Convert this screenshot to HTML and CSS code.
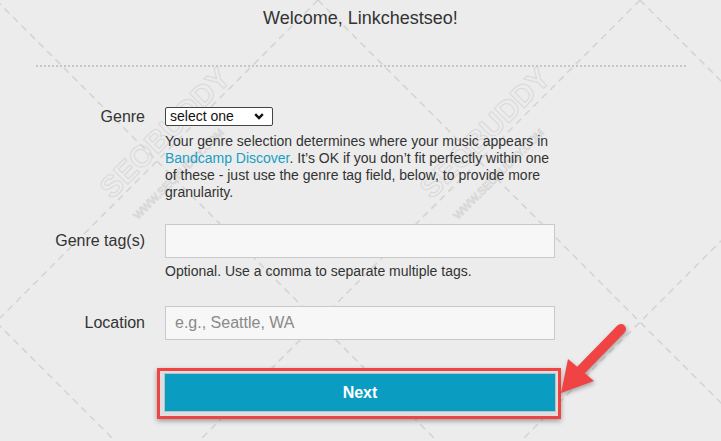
FILE: index.html
```html
<!DOCTYPE html>
<html lang="en">
<head>
<meta charset="utf-8">
<title>Welcome</title>
<link rel="stylesheet" href="styles.css">
</head>
<body>
<div class="page">
  <svg class="watermark" width="721" height="441" viewBox="0 0 721 441" aria-hidden="true">
    <g class="wm-lines">
      <line x1="-4" y1="0" x2="437" y2="441"/>
      <line x1="318" y1="0" x2="759" y2="441"/>
      <line x1="640" y1="0" x2="1081" y2="441"/>
      <line x1="-326" y1="0" x2="115" y2="441"/>
      <line x1="318" y1="0" x2="-123" y2="441"/>
      <line x1="640" y1="0" x2="199" y2="441"/>
      <line x1="962" y1="0" x2="521" y2="441"/>
    </g>
    <g class="wm-text">
      <text class="wm-big" transform="translate(112 200) rotate(-45)">SEOBUDDY</text>
      <text class="wm-small" transform="translate(138 220) rotate(-45)">WWW.SEOBUDDY.COM</text>
      <text class="wm-big" transform="translate(432 200) rotate(-45)">SEOBUDDY</text>
      <text class="wm-small" transform="translate(458 220) rotate(-45)">WWW.SEOBUDDY.COM</text>
    </g>
  </svg>

  <h1 class="welcome">Welcome, Linkchestseo!</h1>
  <div class="rule"></div>

  <form class="form">
    <div class="row row-genre">
      <label class="label" for="genre">Genre</label>
      <div class="field">
        <div class="select-wrap">
          <select id="genre" class="select">
            <option>select one</option>
          </select>
          <svg class="chev" width="10" height="7" viewBox="0 0 10 7"><path d="M1.2 1.2 L5 5 L8.8 1.2" fill="none" stroke="#111" stroke-width="2.4"/></svg>
        </div>
        <p class="help help-genre">Your genre selection determines where your music appears in <a class="link" href="#">Bandcamp Discover</a>. It’s OK if you don’t fit perfectly within one of these - just use the genre tag field, below, to provide more granularity.</p>
      </div>
    </div>

    <div class="row row-tags">
      <label class="label label-input" for="tags">Genre tag(s)</label>
      <div class="field">
        <input id="tags" class="input" type="text">
        <p class="help help-tags">Optional. Use a comma to separate multiple tags.</p>
      </div>
    </div>

    <div class="row row-location">
      <label class="label label-input" for="loc">Location</label>
      <div class="field">
        <input id="loc" class="input" type="text" placeholder="e.g., Seattle, WA">
      </div>
    </div>

    <div class="highlight">
      <button class="next" type="button">Next</button>
    </div>
  </form>

  <svg class="arrow" width="721" height="441" viewBox="0 0 721 441" aria-hidden="true">
    <g class="arrow-g">
      <line x1="621" y1="329" x2="580" y2="371" stroke="#f04343" stroke-width="10" stroke-linecap="round"/>
      <polygon points="561,393 568,359 594,381" fill="#f04343"/>
    </g>
  </svg>
</div>
</body>
</html>
```

FILE: styles.css
```css
* { box-sizing: border-box; }

html, body {
  margin: 0;
  padding: 0;
  background: #ececec;
}

body {
  font-family: "Liberation Sans", Arial, sans-serif;
  color: #333;
  width: 721px;
  height: 441px;
  overflow: hidden;
}

.page {
  position: relative;
  width: 721px;
  height: 441px;
}

.watermark {
  position: absolute;
  left: 0;
  top: 0;
  pointer-events: none;
}

.wm-lines line {
  stroke: #d3d3d3;
  stroke-width: 1.5;
  stroke-dasharray: 7 5;
}

.wm-text text {
  font-family: "Liberation Sans", Arial, sans-serif;
  fill: none;
  stroke: #d9d9d9;
  stroke-width: 1;
}

.wm-big {
  font-size: 30px;
  font-weight: bold;
}

.wm-small {
  font-size: 11px;
  stroke-width: 0.8;
}

.welcome {
  position: relative;
  margin: 0;
  padding-top: 8px;
  font-size: 18px;
  line-height: 21px;
  font-weight: normal;
  text-align: center;
  color: #333;
}

.rule {
  position: relative;
  margin: 36px 35px 0 36px;
  border-top: 2px dotted #c6c6c6;
}

.form {
  position: relative;
  margin-top: 40px;
}

.row {
  display: flex;
  align-items: flex-start;
  gap: 20px;
}

.label {
  width: 145px;
  flex: none;
  text-align: right;
  font-size: 16px;
  line-height: 19px;
  color: #333;
}

.label-input {
  line-height: 34px;
}

.field {
  width: 390px;
  flex: none;
}

.select-wrap {
  position: relative;
  width: 108px;
  height: 19px;
}

.select {
  appearance: none;
  -webkit-appearance: none;
  display: block;
  width: 108px;
  height: 19px;
  margin: 0;
  padding: 0 0 0 4px;
  border: 1px solid #444;
  border-radius: 2px;
  background: #fff;
  font-family: "Liberation Sans", Arial, sans-serif;
  font-size: 14px;
  line-height: 17px;
  color: #111;
}

.chev {
  position: absolute;
  right: 9px;
  top: 6px;
  pointer-events: none;
}

.help {
  margin: 0;
  font-size: 14px;
  line-height: 17px;
  color: #333;
}

.help-genre {
  margin-top: 7px;
}

.help-tags {
  margin-top: 5px;
}

.link {
  color: #1a9dc3;
  text-decoration: none;
}

.row-tags {
  margin-top: 23px;
}

.row-location {
  margin-top: 26px;
}

.input {
  display: block;
  width: 390px;
  height: 34px;
  margin: 0;
  padding: 0 9px;
  border: 1px solid #c9c9c9;
  background: #f7f7f7;
  font-family: "Liberation Sans", Arial, sans-serif;
  font-size: 16px;
  color: #333;
}

.input::placeholder {
  color: #8a8a8a;
}

.highlight {
  width: 404px;
  margin: 28px 0 0 157px;
  padding: 3px 3px 5px 5px;
  border: 3px solid #f04343;
  background: #dedede;
  box-shadow: 0 2px 5px rgba(0, 0, 0, 0.35);
}

.next {
  display: block;
  width: 390px;
  height: 37px;
  margin: 0;
  padding: 0;
  border: none;
  background: #0a9dc1;
  box-shadow: 0 0 0 1px #b9c4c7;
  color: #fff;
  font-family: "Liberation Sans", Arial, sans-serif;
  font-size: 16px;
  font-weight: bold;
  line-height: 37px;
  text-align: center;
}

.arrow {
  position: absolute;
  left: 0;
  top: 0;
  pointer-events: none;
}

.arrow-g {
  filter: drop-shadow(1px 2px 2px rgba(0, 0, 0, 0.3));
}
```
